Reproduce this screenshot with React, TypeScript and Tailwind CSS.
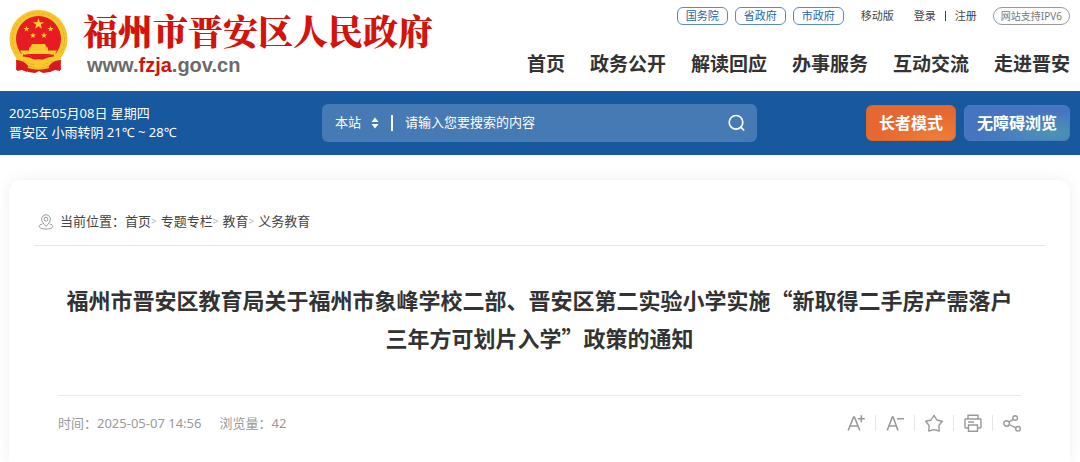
import React from "react";

function Emblem() {
  const star = "M0,-1 L0.2245,-0.309 L0.951,-0.309 L0.3633,0.118 L0.5878,0.809 L0,0.382 L-0.5878,0.809 L-0.3633,0.118 L-0.951,-0.309 L-0.2245,-0.309 Z";
  return (
    <svg viewBox="0 0 60 64" className="h-16 w-15 shrink-0" aria-hidden="true">
      <path d="M8 46 L7 60 L15 58 L19 62 L26 63 L30 61 L34 63 L41 62 L45 58 L52 60 L51 46 Z" fill="#d91920" />
      <ellipse cx="29.5" cy="29" rx="29" ry="29" fill="#f4c62c" />
      <ellipse cx="29.5" cy="29" rx="26" ry="26" fill="none" stroke="#e6b022" strokeWidth="1" strokeDasharray="3 2" />
      <ellipse cx="29.5" cy="29" rx="22.5" ry="23" fill="#e71b22" />
      <path d={star} transform="translate(29.5 14) scale(6)" fill="#fbd22f" />
      <path d={star} transform="translate(17.5 19) scale(3.2)" fill="#fbd22f" />
      <path d={star} transform="translate(41.5 19) scale(3.2)" fill="#fbd22f" />
      <path d={star} transform="translate(24 25.5) scale(3.2)" fill="#fbd22f" />
      <path d={star} transform="translate(35 25.5) scale(3.2)" fill="#fbd22f" />
      <path d="M23 34 H36 L38 38 H21 Z M20 37.5 H39 V42 H20 Z" fill="#f6c92c" />
      <path d="M11 40.5 H48 L46 44 H13 Z" fill="#f9cf2e" />
      <path d="M5 44 Q17 42 26 49 H33 Q42 42 54 44 L50 52 Q42 47 35 54 H24 Q17 47 9 52 Z" fill="#f6c92c" />
      <path d="M14 45.5 Q20 45.5 25 48.5 H34 Q39 45.5 45 45.5" fill="none" stroke="#dc1d20" strokeWidth="1.8" />
      <circle cx="29.5" cy="54" r="4.5" fill="#f6c92c" />
      <path d="M7 50 Q15 50 19 56 L18 62 L13 60 L8 61 Z M52 50 Q44 50 40 56 L41 62 L46 60 L51 61 Z" fill="#d91920" />
      <path d="M19 57 Q29.5 60.5 40 57" fill="none" stroke="#f3bd29" strokeWidth="2" />
    </svg>
  );
}

function PinIcon() {
  return (
    <svg viewBox="0 0 16 16" className="h-4 w-4 shrink-0" fill="none" stroke="#999" strokeWidth="1" aria-hidden="true">
      <path d="M8 12.4 C5.5 9.6 3.6 7.6 3.6 5.2 A4.4 4.4 0 0 1 12.4 5.2 C12.4 7.6 10.5 9.6 8 12.4 Z" />
      <circle cx="8" cy="5.2" r="1.9" />
      <path d="M4.3 10 C2.3 10.4 1.2 11.3 1.2 12.4 C1.2 14 4 15 8 15 C12 15 14.8 14 14.8 12.4 C14.8 11.3 13.7 10.4 11.7 10" />
    </svg>
  );
}

const nav = ["首页", "政务公开", "解读回应", "办事服务", "互动交流", "走进晋安"];
const crumbs = ["首页", "专题专栏", "教育", "义务教育"];

const tools: { label: string; icon: React.ReactNode }[] = [
  {
    label: "放大字体",
    icon: <path d="M1.2 16.5 L6.6 3 H7.4 L12.8 16.5 M3.4 12 H10.6 M10.8 4.8 H17.8 M14.3 1.3 V8.3" strokeWidth="1.6" />,
  },
  {
    label: "缩小字体",
    icon: <path d="M1.2 16.5 L6.3 3 H7.1 L12 16.5 M3.2 12 H10.2 M11 4.8 H18" strokeWidth="1.6" />,
  },
  {
    label: "收藏",
    icon: <path d="M9 1.3 L11.9 6 L17.3 7.3 L13.9 11.5 L14.2 17 L9 15.6 L3.8 17 L4.1 11.5 L0.7 7.3 L6.1 6 Z" strokeLinejoin="round" />,
  },
  {
    label: "打印",
    icon: <path d="M4 5 V1.2 H14 V5 M4.5 14 H1.7 Q1 14 1 13.3 V5.7 Q1 5 1.7 5 H16.3 Q17 5 17 5.7 V13.3 Q17 14 16.3 14 H13.5 M4.5 11 H13.5 V17.2 H4.5 Z M4 8 H10" />,
  },
  {
    label: "分享",
    icon: (
      <>
        <circle cx="3.6" cy="9.5" r="2.8" />
        <circle cx="12.2" cy="4" r="2.3" />
        <circle cx="15" cy="14.8" r="2.3" />
        <path d="M6 8 L10.2 5.3 M6.3 10.5 L12.8 13.9" />
      </>
    ),
  },
];

export default function App() {
  return (
    <div className="flex min-h-screen flex-col bg-white font-['Noto_Sans','Noto_Sans_CJK_SC',sans-serif] text-[#333]">
      <header className="flex h-[91px] items-start justify-between pr-[10px] pl-[9px]">
        <a href="#" className="flex items-start gap-[14px] pt-[10px]">
          <Emblem />
          <span className="flex flex-col">
            <span className="font-['Noto_Serif_CJK_SC','Noto_Sans_CJK_SC',serif] text-[35px] leading-[40px] font-black whitespace-nowrap text-[#d2140c]">
              福州市晋安区人民政府
            </span>
            <span className="pt-[3px] pl-1 font-['Liberation_Sans',sans-serif] text-[20px] leading-6 font-bold text-[#6b6b6b]">
              www.<span className="text-[#d2140c]">fzja</span>.gov.cn
            </span>
          </span>
        </a>
        <div className="flex flex-col items-end whitespace-nowrap">
          <div className="flex h-8 items-center text-[11px] leading-4 text-[#444]">
            <div className="flex gap-[7px]">
              {["国务院", "省政府", "市政府"].map((t) => (
                <a key={t} href="#" className="rounded-md border border-[#5b8bc2] px-2 text-[#2764a8]">
                  {t}
                </a>
              ))}
            </div>
            <a href="#" className="ml-[17px]">移动版</a>
            <a href="#" className="ml-5">登录</a>
            <span className="mx-[9px] h-[10px] w-px bg-[#444]" />
            <a href="#">注册</a>
            <a href="#" className="ml-4 rounded-full border border-[#999] px-[7px] text-[10px] text-[#777]">
              网站支持IPV6
            </a>
          </div>
          <nav className="mt-4 flex gap-[25px] text-[19px] leading-8 font-bold">
            {nav.map((t) => (
              <a key={t} href="#">{t}</a>
            ))}
          </nav>
        </div>
      </header>

      <div className="flex h-16 items-center justify-between bg-[#17589f] pr-[10px] pl-[9px] text-white">
        <div className="flex-1 text-[13px] leading-[19px] whitespace-nowrap">
          <p>2025年05月08日 星期四</p>
          <p>晋安区 小雨转阴 21℃ ~ 28℃</p>
        </div>
        <form className="flex h-[38px] w-[41%] items-center rounded-md bg-[#467ab4] px-[13px] text-[13px]">
          <label className="flex items-center" aria-label="搜索范围">
            <select className="w-9 appearance-none bg-transparent outline-none">
              <option>本站</option>
            </select>
            <svg viewBox="0 0 8 12" className="h-3 w-2" fill="#fff" aria-hidden="true">
              <path d="M4 0.5 L7.5 5 H0.5 Z M4 11.5 L0.5 7 H7.5 Z" />
            </svg>
          </label>
          <span className="mx-3 h-4 w-[2px] bg-white" />
          <input
            type="text"
            aria-label="搜索"
            placeholder="请输入您要搜索的内容"
            className="min-w-0 flex-1 bg-transparent outline-none placeholder:text-white"
          />
          <button type="button" aria-label="搜索" className="-mr-[2px]">
            <svg viewBox="0 0 18 18" className="h-[18px] w-[18px]" fill="none" stroke="#fff" strokeWidth="1.7" strokeLinecap="round">
              <circle cx="8" cy="8.3" r="6.8" />
              <path d="M13 13.3 L15.7 16" />
            </svg>
          </button>
        </form>
        <div className="flex flex-1 justify-end gap-2 text-[16px] font-bold whitespace-nowrap">
          <button type="button" className="h-9 rounded-md border border-[#d9652f] bg-radial-[at_80%_100%] from-[#ec8038] to-[#e66731] to-60% px-3">
            长者模式
          </button>
          <button type="button" className="h-9 rounded-md border border-[#4a7cc0] bg-radial-[at_85%_80%] from-[#4b93b5] to-[#4674c0] to-60% px-3">
            无障碍浏览
          </button>
        </div>
      </div>

      <main className="mr-[10px] ml-[9px] mt-[25px] flex-1 rounded-t-xl bg-white px-[25px] shadow-[0_0_16px_rgba(0,0,0,0.07)]">
        <div className="flex h-[66px] items-center gap-[6px] border-b border-[#e6e6e6] pt-[18px] pl-1 text-[13px] text-[#444]">
          <PinIcon />
          <nav className="flex items-center whitespace-nowrap">
            <span>当前位置：</span>
            {crumbs.map((t, i) => (
              <React.Fragment key={t}>
                {i > 0 && <span className="mr-1 text-[10px] text-[#bbb]">&gt;</span>}
                <a href="#">{t}</a>
              </React.Fragment>
            ))}
          </nav>
        </div>
        <article className="px-6 pt-[34px]">
          <h1 className="text-center text-[22px] leading-[38px] font-bold font-['Noto_Sans_CJK_SC',sans-serif]">
            福州市晋安区教育局关于福州市象峰学校二部、晋安区第二实验小学实施“新取得二手房产需落户
            <br />
            三年方可划片入学”政策的通知
          </h1>
          <div className="mt-[39px] flex items-center justify-between border-t border-[#e9e9e9] pt-[17px] text-[13px] leading-5 text-[#999]">
            <p className="flex gap-[18px]">
              <span>时间：2025-05-07 14:56</span>
              <span>浏览量：42</span>
            </p>
            <div className="flex items-center divide-x divide-[#e6e6e6]">
              {tools.map((t) => (
                <button key={t.label} type="button" aria-label={t.label} className="flex h-4 items-center px-[10px] last:pr-0">
                  <svg viewBox="0 0 18 18" className="h-[18px] w-[18px]" fill="none" stroke="#999" strokeWidth="1.4">
                    {t.icon}
                  </svg>
                </button>
              ))}
            </div>
          </div>
        </article>
      </main>
    </div>
  );
}
